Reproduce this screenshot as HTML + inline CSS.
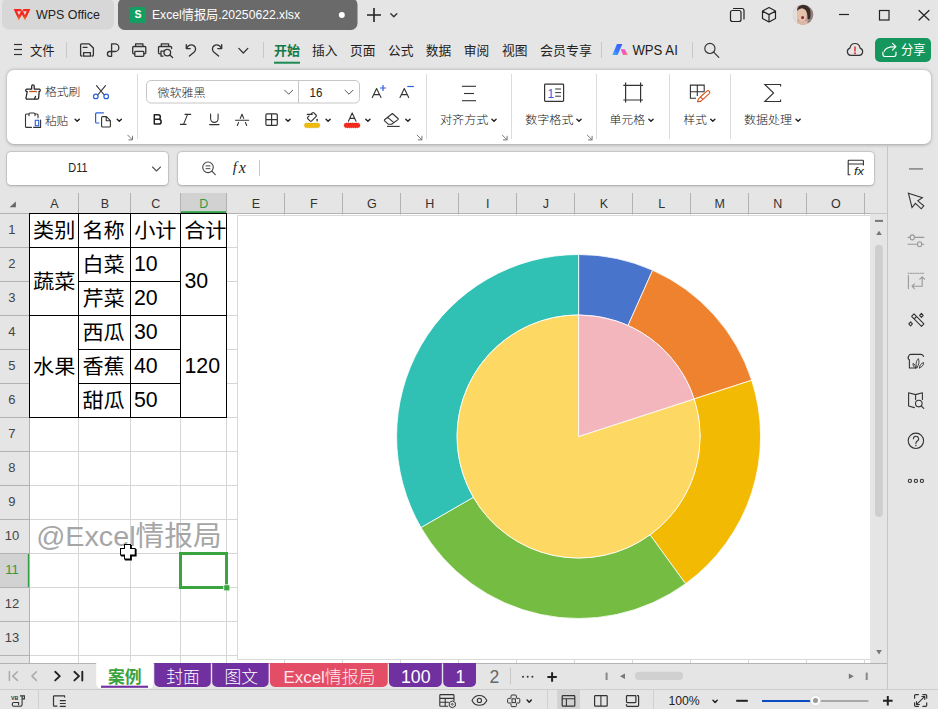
<!DOCTYPE html>
<html lang="zh-CN"><head><meta charset="utf-8"><title>Excel情报局.20250622.xlsx - WPS Office</title>
<style>
html,body{margin:0;padding:0}
body{width:938px;height:709px;overflow:hidden;position:relative;background:#e5e5e5;font-family:"Liberation Sans","Noto Sans CJK SC",sans-serif;}
.panel{position:absolute;background:#fff}
</style></head><body>
<div class="panel" id="ribbon" style="left:7px;top:69.8px;width:924.2px;height:74px;border-radius:7px;box-shadow:0 0.5px 3.5px rgba(0,0,0,.3)"></div>
<div class="panel" id="namebox" style="left:6.6px;top:151.6px;width:161.6px;height:33.9px;border-radius:3.8px;box-shadow:0 0 0 0.6px rgba(0,0,0,.14),0 0.5px 2.5px rgba(0,0,0,.22)"></div>
<div class="panel" id="formulabar" style="left:177.8px;top:151.6px;width:696.5px;height:33.9px;border-radius:3.8px;box-shadow:0 0 0 0.6px rgba(0,0,0,.14),0 0.5px 2.5px rgba(0,0,0,.22)"></div>
<div class="panel" id="sheet" style="left:29px;top:213px;width:841px;height:450px"></div>
<svg width="938" height="709" viewBox="0 0 938 709" style="position:absolute;left:0;top:0;font-family:'Liberation Sans','Noto Sans CJK SC',sans-serif">
<rect x="2" y="-2" width="112" height="31.4" fill="#d7d7d7" rx="6.5"/>
<defs><linearGradient id="wg" x1="0" y1="9" x2="0" y2="20" gradientUnits="userSpaceOnUse"><stop offset="0.55" stop-color="#f5261c"/><stop offset="1" stop-color="#ff7a28"/></linearGradient></defs>
<path d="M21 10.1 H15.4 L18.9 17.9 L22 11.9 L25 17.9 L28.6 10.1 H23.2" fill="none" stroke="url(#wg)" stroke-width="2.3" stroke-linejoin="miter" stroke-linecap="butt"/>
<text x="36" y="19.1" font-size="13.7" fill="#222" textLength="64" lengthAdjust="spacingAndGlyphs">WPS Office</text>
<rect x="118" y="-2" width="239.5" height="32" fill="#6a6a6a" rx="6.5"/>
<rect x="130" y="7" width="16" height="16" fill="#12a062" rx="1.5"/>
<text x="138" y="18.1" font-size="10.5" fill="#fff" font-weight="bold" text-anchor="middle">S</text>
<text x="152" y="19.3" font-size="13" fill="#fff" textLength="148" lengthAdjust="spacingAndGlyphs">Excel情报局.20250622.xlsx</text>
<circle cx="341.8" cy="15" r="3" fill="#fff"/>
<path d="M367 15 H381 M374 8 V22" fill="none" stroke="#222" stroke-width="1.6" stroke-linejoin="round" stroke-linecap="butt"/>
<path d="M390.8 13.7 L393.8 16.7 L396.8 13.7" fill="none" stroke="#333" stroke-width="1.4" stroke-linejoin="round" stroke-linecap="round"/>
<path d="M733.5 8.5 H742 a2 2 0 0 1 2 2 V19" fill="none" stroke="#222" stroke-width="1.2" stroke-linejoin="round" stroke-linecap="round"/>
<rect x="730.5" y="10.5" width="10.5" height="11" fill="none" rx="2" stroke="#222" stroke-width="1.2"/>
<path d="M769 7.5 L775.5 11 V18.5 L769 22 L762.5 18.5 V11 Z M762.8 11.2 L769 14.6 L775.2 11.2 M769 14.6 V21.8" fill="none" stroke="#222" stroke-width="1.2" stroke-linejoin="round" stroke-linecap="round"/>
<clipPath id="av"><circle cx="803" cy="14.6" r="10.2"/></clipPath>
<g clip-path="url(#av)"><rect x="792" y="4" width="22" height="22" fill="#b89c90"/><rect x="792" y="4" width="5.5" height="22" fill="#e2dedc"/><rect x="808" y="8" width="6" height="18" fill="#8f807c"/><path d="M797 11 C797 5 804 3.5 808 6.5 C811 9 811 14 810 19 L807.5 19 C808 13 806 9 802 8.5 C799.5 8.4 798 9.5 797 11 Z" fill="#3b2c29"/><ellipse cx="802" cy="15" rx="4.8" ry="6.6" fill="#e6c2ad"/><ellipse cx="802.6" cy="17.6" rx="1.5" ry="1.7" fill="#8c2f3e"/><rect x="797" y="21" width="10" height="5" fill="#dcb6a6"/></g>
<line x1="839" y1="14.5" x2="849" y2="14.5" stroke="#222" stroke-width="1.2"/>
<rect x="879.5" y="10.5" width="9.5" height="9.5" fill="none" stroke="#222" stroke-width="1.2"/>
<path d="M919 10.5 L929 20 M929 10.5 L919 20" fill="none" stroke="#222" stroke-width="1.2" stroke-linejoin="round" stroke-linecap="round"/>
<line x1="14" y1="44.5" x2="22" y2="44.5" stroke="#333" stroke-width="1.2"/>
<line x1="14" y1="49.5" x2="22" y2="49.5" stroke="#333" stroke-width="1.2"/>
<line x1="14" y1="54.5" x2="22" y2="54.5" stroke="#333" stroke-width="1.2"/>
<text x="30" y="54.6" font-size="12.7" fill="#222" textLength="24.6" lengthAdjust="spacingAndGlyphs">文件</text>
<line x1="66.5" y1="42" x2="66.5" y2="58" stroke="#c8c8c8" stroke-width="1"/>
<path d="M82 56 H81.6 a1 1 0 0 1 -1 -1 V44.8 a1 1 0 0 1 1 -1 H89 L93.4 48 V55 a1 1 0 0 1 -1 1 H92" fill="none" stroke="#333" stroke-width="1.3" stroke-linejoin="round" stroke-linecap="round"/>
<path d="M83.6 56.2 V52.6 H90.4 V56.2 Z M83.2 47.4 H87" fill="none" stroke="#333" stroke-width="1.3" stroke-linejoin="round" stroke-linecap="round"/>
<path d="M111.6 56.3 V43.8 H115 a3.85 3.85 0 0 1 0 7.7 H109.8 a2.4 2.4 0 1 0 0 4.8 H111.6" fill="none" stroke="#333" stroke-width="1.3" stroke-linejoin="round" stroke-linecap="round"/>
<path d="M135.6 46.4 V43.8 H142.9 V46.4 M134.6 53.8 H133.8 a1.1 1.1 0 0 1 -1.1 -1.1 V47.6 a1.1 1.1 0 0 1 1.1 -1.1 H144.7 a1.1 1.1 0 0 1 1.1 1.1 V52.7 a1.1 1.1 0 0 1 -1.1 1.1 H144" fill="none" stroke="#333" stroke-width="1.3" stroke-linejoin="round" stroke-linecap="round"/>
<rect x="134.8" y="51.3" width="9" height="5" fill="none" rx="0.8" stroke="#333" stroke-width="1.3"/>
<path d="M161.3 46.4 V43.8 H168.6 V46.4 M160.6 53.8 H159.6 a1.1 1.1 0 0 1 -1.1 -1.1 V47.6 a1.1 1.1 0 0 1 1.1 -1.1 H170.5 a1.1 1.1 0 0 1 1.1 1.1 V48.5 M164 51.2 H161 V56.2 H163" fill="none" stroke="#333" stroke-width="1.3" stroke-linejoin="round" stroke-linecap="round"/>
<circle cx="167.3" cy="52.6" r="3.3" fill="none" stroke="#333" stroke-width="1.3"/>
<line x1="169.8" y1="55.1" x2="172.6" y2="57.6" stroke="#333" stroke-width="1.3" stroke-linecap="round"/>
<path d="M186.3 44.6 V48.6 H190.2 M186.6 48.4 C188 45.4 191.3 43.8 193.8 45.6 C196.3 47.4 196 50.4 194 52.2 L189.4 56" fill="none" stroke="#333" stroke-width="1.3" stroke-linejoin="round" stroke-linecap="round"/>
<path d="M221.7 44.6 V48.6 H217.8 M221.4 48.4 C220 45.4 216.7 43.8 214.2 45.6 C211.7 47.4 212 50.4 214 52.2 L218.6 56" fill="none" stroke="#333" stroke-width="1.3" stroke-linejoin="round" stroke-linecap="round"/>
<path d="M238.8 48.400000000000006 L243.3 53.0 L247.8 48.400000000000006" fill="none" stroke="#333" stroke-width="1.3" stroke-linejoin="round" stroke-linecap="round"/>
<line x1="263.5" y1="42" x2="263.5" y2="58" stroke="#c8c8c8" stroke-width="1"/>
<text x="274" y="54.9" font-size="12.9" fill="#127a4a" font-weight="bold" textLength="26" lengthAdjust="spacingAndGlyphs">开始</text>
<rect x="274" y="61.7" width="26" height="2" fill="#1c8a52"/>
<text x="312" y="54.9" font-size="12.7" fill="#222" textLength="25.5" lengthAdjust="spacingAndGlyphs">插入</text>
<text x="350" y="54.9" font-size="12.7" fill="#222" textLength="25.5" lengthAdjust="spacingAndGlyphs">页面</text>
<text x="388" y="54.9" font-size="12.7" fill="#222" textLength="25.5" lengthAdjust="spacingAndGlyphs">公式</text>
<text x="425.7" y="54.9" font-size="12.7" fill="#222" textLength="25.5" lengthAdjust="spacingAndGlyphs">数据</text>
<text x="463.8" y="54.9" font-size="12.7" fill="#222" textLength="25.5" lengthAdjust="spacingAndGlyphs">审阅</text>
<text x="502" y="54.9" font-size="12.7" fill="#222" textLength="25.5" lengthAdjust="spacingAndGlyphs">视图</text>
<text x="540" y="54.9" font-size="12.7" fill="#222" textLength="52" lengthAdjust="spacingAndGlyphs">会员专享</text>
<line x1="601.5" y1="42" x2="601.5" y2="58" stroke="#c8c8c8" stroke-width="1"/>
<defs><linearGradient id="ai1" x1="1" y1="0" x2="0" y2="1"><stop offset="0" stop-color="#3d5af5"/><stop offset="0.6" stop-color="#3a78ff"/><stop offset="1" stop-color="#38c0ff"/></linearGradient><linearGradient id="ai2" x1="0" y1="0" x2="1" y2="1"><stop offset="0" stop-color="#e84fd8"/><stop offset="0.6" stop-color="#f658b0"/><stop offset="1" stop-color="#ff9070"/></linearGradient></defs>
<path d="M617 44 H622.4 L617.6 55 H612.3 Z" fill="url(#ai1)" stroke="none" stroke-width="0" stroke-linejoin="round" stroke-linecap="round"/>
<path d="M620.8 49.3 H624.6 L627.9 55 H623.2 L622 52.6 Z" fill="url(#ai2)" stroke="none" stroke-width="0" stroke-linejoin="round" stroke-linecap="round"/>
<text x="632.4" y="55.4" font-size="14" fill="#222" textLength="45.4" lengthAdjust="spacingAndGlyphs">WPS AI</text>
<line x1="692.5" y1="42" x2="692.5" y2="58" stroke="#c8c8c8" stroke-width="1"/>
<circle cx="709.9" cy="48.4" r="5.1" fill="none" stroke="#333" stroke-width="1.15"/>
<line x1="713.7" y1="52.2" x2="718.8" y2="57.4" stroke="#333" stroke-width="1.15" stroke-linecap="round"/>
<path d="M850.8 55.3 a3.7 3.7 0 0 1 -0.9 -7.2 C850.5 45.2 852.6 43.5 855 43.5 C857.4 43.5 859.5 45.2 860.1 48.1 a3.7 3.7 0 0 1 -0.9 7.2 Z" fill="none" stroke="#333" stroke-width="1.2" stroke-linejoin="round" stroke-linecap="round"/>
<line x1="855" y1="46.6" x2="855" y2="51.4" stroke="#e0202a" stroke-width="1.4" stroke-linecap="butt"/>
<circle cx="855" cy="53.2" r="0.95" fill="#e0202a"/>
<rect x="875" y="38" width="56" height="24" fill="#15965d" rx="5"/>
<path d="M882.9 52 V54.3 a2.2 2.2 0 0 0 2.2 2.2 H893.8 a2.2 2.2 0 0 0 2.2 -2.2 V52 M884.3 51.2 C885.5 47.9 889.6 46.7 895.4 46.7 M892.5 43.3 L895.9 46.7 L892.5 50.1" fill="none" stroke="#fff" stroke-width="1.2" stroke-linejoin="round" stroke-linecap="round"/>
<text x="901" y="54.3" font-size="12.6" fill="#fff" textLength="24.6" lengthAdjust="spacingAndGlyphs">分享</text>
<path d="M27.2 91.5 H26.7 a0.9 0.9 0 0 1 -0.9 -0.9 V89.9 a0.9 0.9 0 0 1 0.9 -0.9 H31.7 V86 a1.25 1.25 0 0 1 2.5 0 V89 H39.3 a0.9 0.9 0 0 1 0.9 0.9 V90.6 a0.9 0.9 0 0 1 -0.9 0.9 H38.9 M27.2 91.6 L26 98 a0.9 0.9 0 0 0 0.9 1.1 H37.6 a1 1 0 0 0 1 -0.9 L39.2 91.6 M35.5 96.4 L34.4 99" fill="none" stroke="#222" stroke-width="1.25" stroke-linejoin="round" stroke-linecap="round"/>
<line x1="29.2" y1="91.5" x2="36.9" y2="91.5" stroke="#c8500f" stroke-width="1.3"/>
<text x="45" y="96.4" font-size="11.6" fill="#141414" font-weight="300" textLength="35.4" lengthAdjust="spacingAndGlyphs">格式刷</text>
<path d="M96.5 85.6 L104.3 95 M105.5 85.6 L97.7 95" fill="none" stroke="#333" stroke-width="1.1" stroke-linejoin="round" stroke-linecap="round"/>
<circle cx="95.8" cy="96.4" r="2.3" fill="none" stroke="#2b5fde" stroke-width="1.2"/><circle cx="106.2" cy="96.4" r="2.3" fill="none" stroke="#2b5fde" stroke-width="1.2"/>
<path d="M31.5 127.4 H26.5 a1 1 0 0 1 -1 -1 V115 a1 1 0 0 1 1 -1 H28.6 M35.4 114 H37 a1 1 0 0 1 1 1 V117.8 M29 115.8 V114 a1 1 0 0 1 1 -1 H34 a1 1 0 0 1 1 1 V115.8 M33.6 127.4 H40.6 V120" fill="none" stroke="#333" stroke-width="1.1" stroke-linejoin="round" stroke-linecap="round"/>
<rect x="35.3" y="120.3" width="3.4" height="5.4" fill="none" stroke="#2b5fde" stroke-width="1.1"/>
<text x="45" y="124.6" font-size="11.6" fill="#141414" font-weight="300" textLength="23.2" lengthAdjust="spacingAndGlyphs">粘贴</text>
<path d="M75.10000000000001 119.25 L77.2 121.35 L79.3 119.25" fill="none" stroke="#222" stroke-width="1.4" stroke-linejoin="round" stroke-linecap="round"/>
<path d="M103.4 112.9 H96.6 a1 1 0 0 0 -1 1 V122 a1 1 0 0 0 1 1 H99" fill="none" stroke="#2b5fde" stroke-width="1.2" stroke-linejoin="round" stroke-linecap="round"/>
<path d="M101.6 117.6 a1 1 0 0 1 1 -1 H106.4 L110.4 120.6 V126 a1 1 0 0 1 -1 1 H102.6 a1 1 0 0 1 -1 -1 Z M106.2 116.8 V120.8 H110.2" fill="none" stroke="#333" stroke-width="1.1" stroke-linejoin="round" stroke-linecap="round"/>
<path d="M117.2 119.25 L119.3 121.35 L121.39999999999999 119.25" fill="none" stroke="#222" stroke-width="1.4" stroke-linejoin="round" stroke-linecap="round"/>
<path d="M127.8 135.2 L132.3 139.7 M128.8 139.89999999999998 H132.5 V136.2" fill="none" stroke="#777" stroke-width="1" stroke-linejoin="round" stroke-linecap="round"/>
<line x1="137.5" y1="74" x2="137.5" y2="139" stroke="#dcdcdc" stroke-width="1"/>
<rect x="146.5" y="80.5" width="213" height="22.5" rx="4.5" fill="#fff" stroke="#c6c6c6" stroke-width="1"/>
<line x1="298.5" y1="80.5" x2="298.5" y2="103" stroke="#c6c6c6" stroke-width="1"/>
<text x="157.5" y="97" font-size="11.6" fill="#2a2a2a" font-weight="300" textLength="48" lengthAdjust="spacingAndGlyphs">微软雅黑</text>
<path d="M284.7 90.2 L288.7 94.2 L292.7 90.2" fill="none" stroke="#555" stroke-width="1" stroke-linejoin="round" stroke-linecap="round"/>
<text x="309.6" y="97" font-size="12.5" fill="#222" textLength="12.8" lengthAdjust="spacingAndGlyphs">16</text>
<path d="M345.0 90.2 L349 94.2 L353.0 90.2" fill="none" stroke="#555" stroke-width="1" stroke-linejoin="round" stroke-linecap="round"/>
<path d="M372.3 97.6 L376.6 88.6 L381 97.6 M373.8 94.6 H379.4" fill="none" stroke="#333" stroke-width="1.1" stroke-linejoin="round" stroke-linecap="round"/>
<path d="M380 88 H386 M383 85 V91" fill="none" stroke="#2b5fde" stroke-width="1.2" stroke-linejoin="round" stroke-linecap="butt"/>
<path d="M400 97.6 L404.3 88.6 L408.7 97.6 M401.5 94.6 H407.1" fill="none" stroke="#333" stroke-width="1.1" stroke-linejoin="round" stroke-linecap="round"/>
<path d="M407.3 86.5 H413.8" fill="none" stroke="#2b5fde" stroke-width="1.2" stroke-linejoin="round" stroke-linecap="butt"/>
<path d="M154.3 114.7 V124.1 H158.7 a2.45 2.45 0 0 0 0 -4.9 H154.3 M158.1 119.2 a2.25 2.25 0 0 0 0 -4.5 H154.3" fill="none" stroke="#222" stroke-width="1.5" stroke-linejoin="round" stroke-linecap="round"/>
<path d="M185 114.4 H190.7 M180.4 124.4 H186 M187.6 114.4 L183.5 124.4" fill="none" stroke="#333" stroke-width="1.1" stroke-linejoin="round" stroke-linecap="round"/>
<path d="M210.6 114 V118.6 a3.75 3.75 0 0 0 7.5 0 V114 M209.6 124.6 H219" fill="none" stroke="#333" stroke-width="1.1" stroke-linejoin="round" stroke-linecap="round"/>
<path d="M242 114.2 L240.3 118.4 M242 114.2 L243.7 118.4 M238.6 122.4 L237.3 125.5 M245.4 122.4 L246.7 125.5 M235.5 120.3 H248.6" fill="none" stroke="#333" stroke-width="1.1" stroke-linejoin="round" stroke-linecap="round"/>
<rect x="265.9" y="113.9" width="11.4" height="11.4" fill="none" rx="1" stroke="#333" stroke-width="1.2"/>
<path d="M271.6 113.9 V125.3 M265.9 119.6 H277.3" fill="none" stroke="#333" stroke-width="1.2" stroke-linejoin="round" stroke-linecap="butt"/>
<path d="M285.9 119.25 L288 121.35 L290.1 119.25" fill="none" stroke="#222" stroke-width="1.4" stroke-linejoin="round" stroke-linecap="round"/>
<path d="M309.1 115.9 L307.9 117.1 a1.2 1.2 0 0 0 0 1.7 L310 120.9 a1.2 1.2 0 0 0 1.7 0 L316 116.7 a1.2 1.2 0 0 0 0 -1.7 L313.9 112.9 a1.2 1.2 0 0 0 -1.7 0 L310.8 114.3 M307.3 114.4 H312.2" fill="none" stroke="#333" stroke-width="1.15" stroke-linejoin="round" stroke-linecap="round"/>
<rect x="316.5" y="118.8" width="1.3" height="2.6" fill="#333" rx="0.4"/>
<rect x="304.2" y="123" width="15.8" height="4.8" rx="2.3" fill="#f2b90a" stroke="#8fb81e" stroke-width="0.6" stroke-dasharray="0.9 1.1"/>
<path d="M326.0 119.25 L328.1 121.35 L330.20000000000005 119.25" fill="none" stroke="#222" stroke-width="1.4" stroke-linejoin="round" stroke-linecap="round"/>
<path d="M348.4 121.3 L352.2 112.9 L356 121.3 M349.8 118.4 H354.6" fill="none" stroke="#333" stroke-width="1.1" stroke-linejoin="round" stroke-linecap="round"/>
<rect x="344" y="123" width="16" height="4.8" rx="2.3" fill="#f5281a" stroke="#a01408" stroke-width="0.6" stroke-dasharray="0.9 1.1"/>
<path d="M365.79999999999995 119.25 L367.9 121.35 L370.0 119.25" fill="none" stroke="#222" stroke-width="1.4" stroke-linejoin="round" stroke-linecap="round"/>
<path d="M392.4 113.5 L398 118.5 a0.8 0.8 0 0 1 0 1.1 L391.6 124.2 H388.2 L384.6 120.8 a0.8 0.8 0 0 1 0 -1.1 Z M387.7 117.4 L393.8 122.6" fill="none" stroke="#333" stroke-width="1.1" stroke-linejoin="round" stroke-linecap="round"/>
<line x1="387" y1="126.4" x2="399.7" y2="126.4" stroke="#333" stroke-width="1.1"/>
<path d="M405.79999999999995 119.25 L407.9 121.35 L410.0 119.25" fill="none" stroke="#222" stroke-width="1.4" stroke-linejoin="round" stroke-linecap="round"/>
<path d="M417.2 135.2 L421.7 139.7 M418.2 139.89999999999998 H421.9 V136.2" fill="none" stroke="#777" stroke-width="1" stroke-linejoin="round" stroke-linecap="round"/>
<line x1="426.5" y1="74" x2="426.5" y2="139" stroke="#dcdcdc" stroke-width="1"/>
<line x1="462" y1="86.3" x2="476" y2="86.3" stroke="#333" stroke-width="1.1"/>
<line x1="464" y1="93.5" x2="474" y2="93.5" stroke="#333" stroke-width="1.1"/>
<line x1="462" y1="100.7" x2="476" y2="100.7" stroke="#333" stroke-width="1.1"/>
<text x="440" y="124.4" font-size="11.6" fill="#141414" font-weight="300" textLength="48.3" lengthAdjust="spacingAndGlyphs">对齐方式</text>
<path d="M491.9 119.25 L494 121.35 L496.1 119.25" fill="none" stroke="#222" stroke-width="1.4" stroke-linejoin="round" stroke-linecap="round"/>
<path d="M502.4 135.2 L506.9 139.7 M503.4 139.89999999999998 H507.09999999999997 V136.2" fill="none" stroke="#777" stroke-width="1" stroke-linejoin="round" stroke-linecap="round"/>
<line x1="511.5" y1="74" x2="511.5" y2="139" stroke="#dcdcdc" stroke-width="1"/>
<rect x="544.6" y="84.2" width="19" height="17.2" fill="none" rx="0.8" stroke="#333" stroke-width="1.2"/>
<text x="547.6" y="97.6" font-size="12" fill="#2b5fde">1</text>
<line x1="555.2" y1="89" x2="561" y2="89" stroke="#333" stroke-width="1"/>
<line x1="555.2" y1="92.6" x2="561" y2="92.6" stroke="#333" stroke-width="1"/>
<line x1="555.2" y1="96.2" x2="561" y2="96.2" stroke="#333" stroke-width="1"/>
<text x="525.2" y="124.4" font-size="11.6" fill="#141414" font-weight="300" textLength="48.3" lengthAdjust="spacingAndGlyphs">数字格式</text>
<path d="M576.9 119.25 L579 121.35 L581.1 119.25" fill="none" stroke="#222" stroke-width="1.4" stroke-linejoin="round" stroke-linecap="round"/>
<path d="M587.4 135.2 L591.9 139.7 M588.4 139.89999999999998 H592.1 V136.2" fill="none" stroke="#777" stroke-width="1" stroke-linejoin="round" stroke-linecap="round"/>
<line x1="596.5" y1="74" x2="596.5" y2="139" stroke="#dcdcdc" stroke-width="1"/>
<path d="M625.6 82.5 V102.5 M640.6 82.5 V102.5 M623.3 85.4 H643 M623.3 100 H643" fill="none" stroke="#333" stroke-width="1.2" stroke-linejoin="round" stroke-linecap="butt"/>
<text x="609.5" y="124.4" font-size="11.6" fill="#141414" font-weight="300" textLength="35.6" lengthAdjust="spacingAndGlyphs">单元格</text>
<path d="M648.9 119.25 L651 121.35 L653.1 119.25" fill="none" stroke="#222" stroke-width="1.4" stroke-linejoin="round" stroke-linecap="round"/>
<line x1="669.5" y1="74" x2="669.5" y2="139" stroke="#dcdcdc" stroke-width="1"/>
<path d="M704.2 91.7 V85.1 H690.4 V98.2 H696 M697.3 85.1 V96 M690.4 91.7 H704.2" fill="none" stroke="#333" stroke-width="1.1" stroke-linejoin="miter" stroke-linecap="butt"/>
<path d="M706.8 91.2 a1.6 1.6 0 0 1 2.4 2.4 L703 99.4 L700.4 97 Z M700.4 97 L698.4 99.2 L697.4 101.8 L700.6 101.4 L703 99.4" fill="none" stroke="#d9541e" stroke-width="1.1" stroke-linejoin="round" stroke-linecap="round"/>
<text x="683.6" y="124.4" font-size="11.6" fill="#141414" font-weight="300" textLength="23.2" lengthAdjust="spacingAndGlyphs">样式</text>
<path d="M710.6999999999999 119.25 L712.8 121.35 L714.9 119.25" fill="none" stroke="#222" stroke-width="1.4" stroke-linejoin="round" stroke-linecap="round"/>
<line x1="730.5" y1="74" x2="730.5" y2="139" stroke="#dcdcdc" stroke-width="1"/>
<path d="M780.6 86.6 V84.5 H764.8 L773.6 93 L764.8 101.5 H780.6 V99.4" fill="none" stroke="#333" stroke-width="1.1" stroke-linejoin="miter" stroke-linecap="butt"/>
<text x="743.9" y="124.4" font-size="11.6" fill="#141414" font-weight="300" textLength="48" lengthAdjust="spacingAndGlyphs">数据处理</text>
<path d="M796.0 119.25 L798.1 121.35 L800.2 119.25" fill="none" stroke="#222" stroke-width="1.4" stroke-linejoin="round" stroke-linecap="round"/>
<text x="68.3" y="172.4" font-size="12" fill="#222" textLength="19.2" lengthAdjust="spacingAndGlyphs">D11</text>
<path d="M152.5 167.0 L156.5 171.0 L160.5 167.0" fill="none" stroke="#555" stroke-width="1.1" stroke-linejoin="round" stroke-linecap="round"/>
<circle cx="208" cy="167.3" r="5.3" fill="none" stroke="#444" stroke-width="1.1"/>
<line x1="211.9" y1="171.2" x2="215.3" y2="174.6" stroke="#444" stroke-width="1.1" stroke-linecap="round"/>
<line x1="205.6" y1="165.9" x2="210.4" y2="165.9" stroke="#444" stroke-width="1"/>
<line x1="205.6" y1="168.7" x2="210.4" y2="168.7" stroke="#444" stroke-width="1"/>
<text x="232.8" y="172" font-size="14.8" fill="#222" font-style="italic" font-family="'Liberation Serif',serif">f</text>
<text x="238.8" y="173.4" font-size="16" fill="#222" font-style="italic" font-family="'Liberation Serif',serif">x</text>
<line x1="259.5" y1="160" x2="259.5" y2="176" stroke="#c8c8c8" stroke-width="1"/>
<path d="M848.2 174.6 V161 a0.8 0.8 0 0 1 0.8 -0.8 H862.6 a0.8 0.8 0 0 1 0.8 0.8 V165 M848.2 164 H863.4 M848.2 174.8 H850" fill="none" stroke="#333" stroke-width="1.1" stroke-linejoin="round" stroke-linecap="round"/>
<text x="854" y="174.9" font-size="11" fill="#222" textLength="10" lengthAdjust="spacingAndGlyphs" font-style="italic">fx</text>
<rect x="181" y="193" width="45" height="18.5" fill="#d2d2d2"/>
<rect x="180.5" y="211.2" width="46.5" height="2" fill="#2ea043"/>
<line x1="78.5" y1="193" x2="78.5" y2="213" stroke="#b2b2b2" stroke-width="1"/>
<line x1="130.5" y1="193" x2="130.5" y2="213" stroke="#b2b2b2" stroke-width="1"/>
<line x1="180.5" y1="193" x2="180.5" y2="213" stroke="#b2b2b2" stroke-width="1"/>
<line x1="226.5" y1="193" x2="226.5" y2="213" stroke="#b2b2b2" stroke-width="1"/>
<line x1="284.5" y1="193" x2="284.5" y2="213" stroke="#b2b2b2" stroke-width="1"/>
<line x1="342.5" y1="193" x2="342.5" y2="213" stroke="#b2b2b2" stroke-width="1"/>
<line x1="400.5" y1="193" x2="400.5" y2="213" stroke="#b2b2b2" stroke-width="1"/>
<line x1="458.5" y1="193" x2="458.5" y2="213" stroke="#b2b2b2" stroke-width="1"/>
<line x1="516.5" y1="193" x2="516.5" y2="213" stroke="#b2b2b2" stroke-width="1"/>
<line x1="574.5" y1="193" x2="574.5" y2="213" stroke="#b2b2b2" stroke-width="1"/>
<line x1="632.5" y1="193" x2="632.5" y2="213" stroke="#b2b2b2" stroke-width="1"/>
<line x1="690.5" y1="193" x2="690.5" y2="213" stroke="#b2b2b2" stroke-width="1"/>
<line x1="748.5" y1="193" x2="748.5" y2="213" stroke="#b2b2b2" stroke-width="1"/>
<line x1="806.5" y1="193" x2="806.5" y2="213" stroke="#b2b2b2" stroke-width="1"/>
<line x1="864.5" y1="193" x2="864.5" y2="213" stroke="#b2b2b2" stroke-width="1"/>
<text x="54.3" y="207.9" font-size="12.5" fill="#333" text-anchor="middle">A</text>
<text x="104.8" y="207.9" font-size="12.5" fill="#333" text-anchor="middle">B</text>
<text x="155.8" y="207.9" font-size="12.5" fill="#333" text-anchor="middle">C</text>
<text x="203.8" y="207.9" font-size="12.5" fill="#2e9b40" text-anchor="middle">D</text>
<text x="255.8" y="207.9" font-size="12.5" fill="#333" text-anchor="middle">E</text>
<text x="313.8" y="207.9" font-size="12.5" fill="#333" text-anchor="middle">F</text>
<text x="371.8" y="207.9" font-size="12.5" fill="#333" text-anchor="middle">G</text>
<text x="429.8" y="207.9" font-size="12.5" fill="#333" text-anchor="middle">H</text>
<text x="487.8" y="207.9" font-size="12.5" fill="#333" text-anchor="middle">I</text>
<text x="545.8" y="207.9" font-size="12.5" fill="#333" text-anchor="middle">J</text>
<text x="603.8" y="207.9" font-size="12.5" fill="#333" text-anchor="middle">K</text>
<text x="661.8" y="207.9" font-size="12.5" fill="#333" text-anchor="middle">L</text>
<text x="719.8" y="207.9" font-size="12.5" fill="#333" text-anchor="middle">M</text>
<text x="777.8" y="207.9" font-size="12.5" fill="#333" text-anchor="middle">N</text>
<text x="835.8" y="207.9" font-size="12.5" fill="#333" text-anchor="middle">O</text>
<path d="M15.9 201.6 V207.3 H9.6 Z" fill="#666"/>
<rect x="0" y="553.5" width="29" height="33.5" fill="#d2d2d2"/>
<rect x="27.8" y="553" width="1.6" height="34.5" fill="#2ea043"/>
<line x1="0" y1="247.5" x2="29" y2="247.5" stroke="#b2b2b2" stroke-width="1"/>
<line x1="29" y1="247.5" x2="870" y2="247.5" stroke="#d6d6d6" stroke-width="1"/>
<text x="11.9" y="234.4" font-size="13" fill="#444" text-anchor="middle">1</text>
<line x1="0" y1="281.5" x2="29" y2="281.5" stroke="#b2b2b2" stroke-width="1"/>
<line x1="29" y1="281.5" x2="870" y2="281.5" stroke="#d6d6d6" stroke-width="1"/>
<text x="11.9" y="268.4" font-size="13" fill="#444" text-anchor="middle">2</text>
<line x1="0" y1="315.5" x2="29" y2="315.5" stroke="#b2b2b2" stroke-width="1"/>
<line x1="29" y1="315.5" x2="870" y2="315.5" stroke="#d6d6d6" stroke-width="1"/>
<text x="11.9" y="302.4" font-size="13" fill="#444" text-anchor="middle">3</text>
<line x1="0" y1="349.5" x2="29" y2="349.5" stroke="#b2b2b2" stroke-width="1"/>
<line x1="29" y1="349.5" x2="870" y2="349.5" stroke="#d6d6d6" stroke-width="1"/>
<text x="11.9" y="336.4" font-size="13" fill="#444" text-anchor="middle">4</text>
<line x1="0" y1="383.5" x2="29" y2="383.5" stroke="#b2b2b2" stroke-width="1"/>
<line x1="29" y1="383.5" x2="870" y2="383.5" stroke="#d6d6d6" stroke-width="1"/>
<text x="11.9" y="370.4" font-size="13" fill="#444" text-anchor="middle">5</text>
<line x1="0" y1="417.5" x2="29" y2="417.5" stroke="#b2b2b2" stroke-width="1"/>
<line x1="29" y1="417.5" x2="870" y2="417.5" stroke="#d6d6d6" stroke-width="1"/>
<text x="11.9" y="404.4" font-size="13" fill="#444" text-anchor="middle">6</text>
<line x1="0" y1="451.5" x2="29" y2="451.5" stroke="#b2b2b2" stroke-width="1"/>
<line x1="29" y1="451.5" x2="870" y2="451.5" stroke="#d6d6d6" stroke-width="1"/>
<text x="11.9" y="438.4" font-size="13" fill="#444" text-anchor="middle">7</text>
<line x1="0" y1="485.5" x2="29" y2="485.5" stroke="#b2b2b2" stroke-width="1"/>
<line x1="29" y1="485.5" x2="870" y2="485.5" stroke="#d6d6d6" stroke-width="1"/>
<text x="11.9" y="472.4" font-size="13" fill="#444" text-anchor="middle">8</text>
<line x1="0" y1="519.5" x2="29" y2="519.5" stroke="#b2b2b2" stroke-width="1"/>
<line x1="29" y1="519.5" x2="870" y2="519.5" stroke="#d6d6d6" stroke-width="1"/>
<text x="11.9" y="506.4" font-size="13" fill="#444" text-anchor="middle">9</text>
<line x1="0" y1="553.5" x2="29" y2="553.5" stroke="#b2b2b2" stroke-width="1"/>
<line x1="29" y1="553.5" x2="870" y2="553.5" stroke="#d6d6d6" stroke-width="1"/>
<text x="11.9" y="540.4" font-size="13" fill="#444" text-anchor="middle">10</text>
<line x1="0" y1="587.5" x2="29" y2="587.5" stroke="#b2b2b2" stroke-width="1"/>
<line x1="29" y1="587.5" x2="870" y2="587.5" stroke="#d6d6d6" stroke-width="1"/>
<text x="11.9" y="574.4" font-size="13" fill="#2e9b40" text-anchor="middle">11</text>
<line x1="0" y1="621.5" x2="29" y2="621.5" stroke="#b2b2b2" stroke-width="1"/>
<line x1="29" y1="621.5" x2="870" y2="621.5" stroke="#d6d6d6" stroke-width="1"/>
<text x="11.9" y="608.4" font-size="13" fill="#444" text-anchor="middle">12</text>
<line x1="0" y1="655.5" x2="29" y2="655.5" stroke="#b2b2b2" stroke-width="1"/>
<line x1="29" y1="655.5" x2="870" y2="655.5" stroke="#d6d6d6" stroke-width="1"/>
<text x="11.9" y="642.4" font-size="13" fill="#444" text-anchor="middle">13</text>
<line x1="0" y1="213.5" x2="870" y2="213.5" stroke="#b2b2b2" stroke-width="1"/>
<line x1="29.5" y1="214" x2="29.5" y2="663" stroke="#d6d6d6" stroke-width="1"/>
<line x1="78.5" y1="214" x2="78.5" y2="663" stroke="#d6d6d6" stroke-width="1"/>
<line x1="130.5" y1="214" x2="130.5" y2="663" stroke="#d6d6d6" stroke-width="1"/>
<line x1="180.5" y1="214" x2="180.5" y2="663" stroke="#d6d6d6" stroke-width="1"/>
<line x1="226.5" y1="214" x2="226.5" y2="663" stroke="#d6d6d6" stroke-width="1"/>
<line x1="284.5" y1="214" x2="284.5" y2="663" stroke="#d6d6d6" stroke-width="1"/>
<line x1="342.5" y1="214" x2="342.5" y2="663" stroke="#d6d6d6" stroke-width="1"/>
<line x1="400.5" y1="214" x2="400.5" y2="663" stroke="#d6d6d6" stroke-width="1"/>
<line x1="458.5" y1="214" x2="458.5" y2="663" stroke="#d6d6d6" stroke-width="1"/>
<line x1="516.5" y1="214" x2="516.5" y2="663" stroke="#d6d6d6" stroke-width="1"/>
<line x1="574.5" y1="214" x2="574.5" y2="663" stroke="#d6d6d6" stroke-width="1"/>
<line x1="632.5" y1="214" x2="632.5" y2="663" stroke="#d6d6d6" stroke-width="1"/>
<line x1="690.5" y1="214" x2="690.5" y2="663" stroke="#d6d6d6" stroke-width="1"/>
<line x1="748.5" y1="214" x2="748.5" y2="663" stroke="#d6d6d6" stroke-width="1"/>
<line x1="806.5" y1="214" x2="806.5" y2="663" stroke="#d6d6d6" stroke-width="1"/>
<line x1="864.5" y1="214" x2="864.5" y2="663" stroke="#d6d6d6" stroke-width="1"/>
<line x1="29.5" y1="214" x2="29.5" y2="663" stroke="#b2b2b2" stroke-width="1"/>
<rect x="30" y="214" width="196.5" height="203.5" fill="#fff"/>
<line x1="29.5" y1="213.5" x2="29.5" y2="417.5" stroke="#000" stroke-width="1" stroke-linecap="square"/>
<line x1="78.5" y1="213.5" x2="78.5" y2="417.5" stroke="#000" stroke-width="1" stroke-linecap="square"/>
<line x1="130.5" y1="213.5" x2="130.5" y2="417.5" stroke="#000" stroke-width="1" stroke-linecap="square"/>
<line x1="180.5" y1="213.5" x2="180.5" y2="417.5" stroke="#000" stroke-width="1" stroke-linecap="square"/>
<line x1="226.5" y1="213.5" x2="226.5" y2="417.5" stroke="#000" stroke-width="1" stroke-linecap="square"/>
<line x1="29.5" y1="213.5" x2="226.5" y2="213.5" stroke="#000" stroke-width="1" stroke-linecap="square"/>
<line x1="29.5" y1="247.5" x2="226.5" y2="247.5" stroke="#000" stroke-width="1" stroke-linecap="square"/>
<line x1="29.5" y1="315.5" x2="226.5" y2="315.5" stroke="#000" stroke-width="1" stroke-linecap="square"/>
<line x1="29.5" y1="417.5" x2="226.5" y2="417.5" stroke="#000" stroke-width="1" stroke-linecap="square"/>
<line x1="78.5" y1="281.5" x2="180.5" y2="281.5" stroke="#000" stroke-width="1" stroke-linecap="square"/>
<line x1="78.5" y1="349.5" x2="180.5" y2="349.5" stroke="#000" stroke-width="1" stroke-linecap="square"/>
<line x1="78.5" y1="383.5" x2="180.5" y2="383.5" stroke="#000" stroke-width="1" stroke-linecap="square"/>
<text x="33" y="237.9" font-size="20" fill="#000" textLength="42.3" lengthAdjust="spacingAndGlyphs">类别</text>
<text x="82.4" y="237.9" font-size="20" fill="#000" textLength="42.3" lengthAdjust="spacingAndGlyphs">名称</text>
<text x="134.2" y="237.9" font-size="20" fill="#000" textLength="42.3" lengthAdjust="spacingAndGlyphs">小计</text>
<text x="184.2" y="237.9" font-size="20" fill="#000" textLength="42.3" lengthAdjust="spacingAndGlyphs">合计</text>
<text x="33" y="288.9" font-size="20" fill="#000" textLength="42.3" lengthAdjust="spacingAndGlyphs">蔬菜</text>
<text x="33" y="373.9" font-size="20" fill="#000" textLength="42.3" lengthAdjust="spacingAndGlyphs">水果</text>
<text x="82.4" y="271.9" font-size="20" fill="#000" textLength="42.3" lengthAdjust="spacingAndGlyphs">白菜</text>
<text x="82.4" y="305.9" font-size="20" fill="#000" textLength="42.3" lengthAdjust="spacingAndGlyphs">芹菜</text>
<text x="82.4" y="339.9" font-size="20" fill="#000" textLength="42.3" lengthAdjust="spacingAndGlyphs">西瓜</text>
<text x="82.4" y="373.9" font-size="20" fill="#000" textLength="42.3" lengthAdjust="spacingAndGlyphs">香蕉</text>
<text x="82.4" y="407.9" font-size="20" fill="#000" textLength="42.3" lengthAdjust="spacingAndGlyphs">甜瓜</text>
<text x="134" y="271.3" font-size="21.33" fill="#000">10</text>
<text x="134" y="305.3" font-size="21.33" fill="#000">20</text>
<text x="134" y="339.3" font-size="21.33" fill="#000">30</text>
<text x="134" y="373.3" font-size="21.33" fill="#000">40</text>
<text x="134" y="407.3" font-size="21.33" fill="#000">50</text>
<text x="184.5" y="288.3" font-size="21.33" fill="#000">30</text>
<text x="184.5" y="373.3" font-size="21.33" fill="#000">120</text>
<text x="36.2" y="546.3" font-size="28" fill="#a6a6a6" textLength="185.6" lengthAdjust="spacingAndGlyphs">@Excel情报局</text>
<rect x="180.5" y="553.5" width="46" height="34" fill="none" stroke="#3aa53f" stroke-width="3"/>
<rect x="223.4" y="584.4" width="6.2" height="6.2" fill="#fff"/>
<rect x="224.2" y="585.2" width="5.2" height="5.2" fill="#3aa53f"/>
<rect x="237.5" y="215.5" width="640" height="444" fill="#fff" stroke="#d9d9d9" stroke-width="1"/>
<path d="M578.60 254.50 A182 182 0 0 1 652.63 270.23 L628.02 325.50 A121.5 121.5 0 0 0 578.60 315.00 Z" fill="#4874cb" stroke="#fff" stroke-width="0.8" stroke-linejoin="round"/>
<path d="M652.63 270.23 A182 182 0 0 1 751.69 380.26 L694.15 398.95 A121.5 121.5 0 0 0 628.02 325.50 Z" fill="#ee822f" stroke="#fff" stroke-width="0.8" stroke-linejoin="round"/>
<path d="M751.69 380.26 A182 182 0 0 1 685.58 583.74 L650.02 534.80 A121.5 121.5 0 0 0 694.15 398.95 Z" fill="#f2ba02" stroke="#fff" stroke-width="0.8" stroke-linejoin="round"/>
<path d="M685.58 583.74 A182 182 0 0 1 420.98 527.50 L473.38 497.25 A121.5 121.5 0 0 0 650.02 534.80 Z" fill="#75bd42" stroke="#fff" stroke-width="0.8" stroke-linejoin="round"/>
<path d="M420.98 527.50 A182 182 0 0 1 578.60 254.50 L578.60 315.00 A121.5 121.5 0 0 0 473.38 497.25 Z" fill="#30c0b4" stroke="#fff" stroke-width="0.8" stroke-linejoin="round"/>
<path d="M578.6 436.5 L694.15 398.95 A121.5 121.5 0 1 1 578.60 315.00 Z" fill="#fdd862" stroke="#fff" stroke-width="0.8" stroke-linejoin="round"/>
<path d="M578.6 436.5 L578.60 315.00 A121.5 121.5 0 0 1 694.15 398.95 Z" fill="#f4b6bd" stroke="#fff" stroke-width="0.8" stroke-linejoin="round"/>
<path d="M124 544 H131 V548 H135.7 V555.5 H131 V559.5 H124 V555.5 H120 V548 H124 Z" fill="#000" transform="translate(0.9,0.9)"/><path d="M124 544 H131 V548 H135.7 V555.5 H131 V559.5 H124 V555.5 H120 V548 H124 Z" fill="#000"/><path d="M125 545 H130 V549 H134.7 V554.5 H130 V558.5 H125 V554.5 H121 V549 H125 Z" fill="#fff"/>
<rect x="870" y="214" width="17.5" height="449.5" fill="#e5e5e5"/>
<line x1="870" y1="213.5" x2="888" y2="213.5" stroke="#c8c8c8" stroke-width="1"/>
<line x1="887.5" y1="145" x2="887.5" y2="689" stroke="#c6c6c6" stroke-width="1"/>
<line x1="875" y1="220.9" x2="883" y2="220.9" stroke="#777" stroke-width="2"/>
<path d="M876.2 235.1 L879 230.7 L881.8 235.1 Z" fill="#777"/>
<rect x="875" y="244.8" width="7.8" height="272.2" fill="#cecece" rx="3.9"/>
<path d="M876.2 650 L879 654.4 L881.8 650 Z" fill="#777"/>
<line x1="0" y1="663.5" x2="96" y2="663.5" stroke="#c8c8c8" stroke-width="1"/>
<line x1="152" y1="663.5" x2="888" y2="663.5" stroke="#c8c8c8" stroke-width="1"/>
<rect x="0" y="664" width="938" height="25" fill="#e5e5e5"/>
<line x1="0" y1="663.5" x2="888" y2="663.5" stroke="#b4b4b4" stroke-width="1"/>
<line x1="887.5" y1="663" x2="887.5" y2="689" stroke="#c6c6c6" stroke-width="1"/>
<path d="M9.4 671.6 V680.6 M17.4 671.8 L12.8 676.1 L17.4 680.4" fill="none" stroke="#aaa" stroke-width="1.5" stroke-linejoin="round" stroke-linecap="round"/>
<path d="M36.4 671.8 L31.9 676.1 L36.4 680.4" fill="none" stroke="#aaa" stroke-width="1.5" stroke-linejoin="round" stroke-linecap="round"/>
<path d="M55.2 671.8 L59.8 676.1 L55.2 680.4" fill="none" stroke="#222" stroke-width="1.9" stroke-linejoin="round" stroke-linecap="round"/>
<path d="M74.4 671.8 L79 676.1 L74.4 680.4 M82.3 671.6 V680.6" fill="none" stroke="#222" stroke-width="1.9" stroke-linejoin="round" stroke-linecap="round"/>
<path d="M96.2 662 H153.3 V683.6 a5 5 0 0 1 -5 5 H101.2 a5 5 0 0 1 -5 -5 Z" fill="#fff"/>
<text x="108" y="682.8" font-size="17" fill="#3aa23a" font-weight="bold" textLength="33.6" lengthAdjust="spacingAndGlyphs">案例</text>
<rect x="101" y="685.7" width="47" height="2.1" fill="#7030a0"/>
<path d="M154.3 663 H210.8 V682 a5 5 0 0 1 -5 5 H159.3 a5 5 0 0 1 -5 -5 Z" fill="#7030a0"/>
<text x="166.2" y="682.6" font-size="16.8" fill="#fff" font-weight="300" textLength="33.4" lengthAdjust="spacingAndGlyphs">封面</text>
<path d="M212.2 663 H268.6 V682 a5 5 0 0 1 -5 5 H217.2 a5 5 0 0 1 -5 -5 Z" fill="#7030a0"/>
<text x="224.4" y="682.6" font-size="16.8" fill="#fff" font-weight="300" textLength="33.6" lengthAdjust="spacingAndGlyphs">图文</text>
<path d="M270 663 H387.7 V682 a5 5 0 0 1 -5 5 H275 a5 5 0 0 1 -5 -5 Z" fill="#e34d66"/>
<text x="283.6" y="682.6" font-size="16.8" fill="#fde8ee" font-weight="300" textLength="91.8" lengthAdjust="spacingAndGlyphs">Excel情报局</text>
<path d="M389 663 H441.8 V682 a5 5 0 0 1 -5 5 H394 a5 5 0 0 1 -5 -5 Z" fill="#7030a0"/>
<text x="401" y="683" font-size="17.5" fill="#fff" textLength="29.6" lengthAdjust="spacingAndGlyphs">100</text>
<path d="M443.2 663 H476 V682 a5 5 0 0 1 -5 5 H448.2 a5 5 0 0 1 -5 -5 Z" fill="#7030a0"/>
<text x="455.4" y="683" font-size="17.5" fill="#fff">1</text>
<text x="489.4" y="683" font-size="17.5" fill="#666">2</text>
<line x1="510.5" y1="667.5" x2="510.5" y2="684.5" stroke="#c8c8c8" stroke-width="1"/>
<circle cx="523" cy="676.7" r="1" fill="#333"/>
<circle cx="527.7" cy="676.7" r="1" fill="#333"/>
<circle cx="532.4" cy="676.7" r="1" fill="#333"/>
<path d="M547.4 677 H556.8 M552.1 672.2 V681.8" fill="none" stroke="#222" stroke-width="2" stroke-linejoin="round" stroke-linecap="butt"/>
<line x1="606.6" y1="672.6" x2="606.6" y2="680" stroke="#888" stroke-width="2"/>
<path d="M625 673.6 L620 676.3 L625 679 Z" fill="#777"/>
<rect x="635" y="671.7" width="48" height="8.2" fill="#d0d0d0" rx="4"/>
<path d="M848.8 673.6 L853.8 676.3 L848.8 679 Z" fill="#777"/>
<line x1="866.7" y1="672.6" x2="866.7" y2="680" stroke="#888" stroke-width="2"/>
<line x1="0" y1="689.5" x2="938" y2="689.5" stroke="#cdcdcd" stroke-width="1"/>
<line x1="38.5" y1="690" x2="38.5" y2="709" stroke="#d0d0d0" stroke-width="1"/>
<text x="11" y="699.6" font-size="5.6" fill="#333" font-weight="bold" textLength="7.4" lengthAdjust="spacingAndGlyphs">VB</text>
<path d="M20.4 695.9 H24.4 V698.9 H22.3 M22.1 695.9 V704.6 a1.7 1.7 0 0 1 -1.7 1.7 H13.8 a1.5 1.5 0 0 1 -1.5 -1.5 V704 a1.5 1.5 0 0 1 1.5 -1.5 H18.6 V704.8" fill="none" stroke="#333" stroke-width="1.1" stroke-linejoin="miter" stroke-linecap="round"/>
<path d="M64.6 697.6 V695.9 H54.3 a0.8 0.8 0 0 0 -0.8 0.8 V705.4 a0.8 0.8 0 0 0 0.8 0.8 H57.4 M59.8 700.6 H65.8 M59.8 703.5 H65.8 M59.8 706.3 H65.8" fill="none" stroke="#333" stroke-width="1.2" stroke-linejoin="round" stroke-linecap="butt"/>
<path d="M454 700.4 V695.4 a0.8 0.8 0 0 0 -0.8 -0.8 H440.6 a0.8 0.8 0 0 0 -0.8 0.8 V705.4 a0.8 0.8 0 0 0 0.8 0.8 H447.6 M439.8 698.4 H454 M439.8 702.3 H448.4 M445.2 698.4 V706.2" fill="none" stroke="#333" stroke-width="1.1" stroke-linejoin="round" stroke-linecap="round"/>
<path d="M452.3 700.9 L455.3 702.6 V706.1 L452.3 707.8 L449.3 706.1 V702.6 Z" fill="#e5e5e5" stroke="#333" stroke-width="1"/><circle cx="452.3" cy="704.35" r="0.9" fill="none" stroke="#333" stroke-width="0.8"/>
<path d="M472 700.4 C475.2 693.9 483.6 693.9 486.8 700.4 C483.6 706.9 475.2 706.9 472 700.4 Z" fill="none" stroke="#333" stroke-width="1.1" stroke-linejoin="round" stroke-linecap="round"/>
<circle cx="479.4" cy="700.4" r="2.1" fill="none" stroke="#333" stroke-width="1.1"/>
<path d="M511 697.6 V696 a1 1 0 0 1 1 -1 H515.4 a1 1 0 0 1 1 1 V697.6 M511 703.8 V705.6 a1 1 0 0 0 1 1 H515.4 a1 1 0 0 0 1 -1 V703.8 M510.4 698.4 H508.6 a1 1 0 0 0 -1 1 V702 a1 1 0 0 0 1 1 H510.4 M517 698.4 H518.8 a1 1 0 0 1 1 1 V702 a1 1 0 0 1 -1 1 H517" fill="none" stroke="#333" stroke-width="1" stroke-linejoin="round" stroke-linecap="round"/>
<rect x="512" y="698.8" width="3.4" height="3.8" fill="none" stroke="#333" stroke-width="1"/>
<path d="M527.1 700.1 L529.2 702.3000000000001 L531.3000000000001 700.1" fill="none" stroke="#222" stroke-width="1.5" stroke-linejoin="round" stroke-linecap="round"/>
<line x1="547.5" y1="690" x2="547.5" y2="709" stroke="#d0d0d0" stroke-width="1"/>
<rect x="557.2" y="690" width="22.8" height="19" fill="#d2d2d2"/>
<rect x="562.2" y="695.6" width="12.6" height="10.6" fill="none" rx="0.8" stroke="#333" stroke-width="1.2"/>
<path d="M562.2 698.8 H574.8000000000001 M566.4000000000001 698.8 V706" fill="none" stroke="#333" stroke-width="1.1" stroke-linejoin="round" stroke-linecap="butt"/>
<rect x="594.6" y="695.6" width="12.6" height="10.6" fill="none" rx="0.8" stroke="#333" stroke-width="1.2"/>
<path d="M600.9 695.6 V706" fill="none" stroke="#333" stroke-width="1.1" stroke-linejoin="round" stroke-linecap="butt"/>
<rect x="626.5" y="695.6" width="9.4" height="7" fill="none" rx="0.8" stroke="#333" stroke-width="1.2"/>
<path d="M637.4 695.6 H637.8 a0.8 0.8 0 0 1 0.8 0.8 V705.5 a0.8 0.8 0 0 1 -0.8 0.8 H627.3 a0.8 0.8 0 0 1 -0.8 -0.8 V704.6" fill="none" stroke="#333" stroke-width="1.2" stroke-linejoin="round" stroke-linecap="round"/>
<line x1="653.5" y1="690" x2="653.5" y2="709" stroke="#d0d0d0" stroke-width="1"/>
<text x="668.4" y="704.6" font-size="13" fill="#222" textLength="31.4" lengthAdjust="spacingAndGlyphs">100%</text>
<path d="M713.0 700.3 L715.1 702.5 L717.2 700.3" fill="none" stroke="#222" stroke-width="1.5" stroke-linejoin="round" stroke-linecap="round"/>
<line x1="736.2" y1="700.8" x2="747.8" y2="700.8" stroke="#222" stroke-width="2"/>
<line x1="762" y1="700.9" x2="811" y2="700.9" stroke="#0a4bc2" stroke-width="2"/>
<line x1="820" y1="700.9" x2="868.4" y2="700.9" stroke="#a8a8a8" stroke-width="2"/>
<circle cx="815.5" cy="700.6" r="5.2" fill="#fbfbfb" stroke="#d8d8d8" stroke-width="0.7"/><circle cx="815.5" cy="700.6" r="2.5" fill="#999"/>
<path d="M883 700.8 H892.6 M887.8 696 V705.6" fill="none" stroke="#222" stroke-width="2" stroke-linejoin="round" stroke-linecap="butt"/>
<path d="M914.6 698.2 V695.7 a1.1 1.1 0 0 1 1.1 -1.1 H918.4 M922.9 694.6 H925.6 a1.1 1.1 0 0 1 1.1 1.1 V698.2 M914.6 702.8 V705.3 a1.1 1.1 0 0 0 1.1 1.1 H918.4 M922.9 706.4 H925.6 a1.1 1.1 0 0 0 1.1 -1.1 V702.8" fill="none" stroke="#333" stroke-width="1.2" stroke-linejoin="round" stroke-linecap="round"/>
<path d="M916.7 704.3 L924.6 696.7 M921.9 696.5 H924.8 V699.4 M916.5 701.6 V704.5 H919.4" fill="none" stroke="#333" stroke-width="1.1" stroke-linejoin="round" stroke-linecap="round"/>
<line x1="909" y1="168.9" x2="923" y2="168.9" stroke="#888" stroke-width="1.6"/>
<path d="M908.4 193.2 L922.4 197.7 L917.8 200.9 L923.8 205.8 L921.3 208.8 L915.4 203.4 L912 207.5 Z" fill="none" stroke="#333" stroke-width="1.1" stroke-linejoin="miter" stroke-linecap="round"/>
<path d="M908 237.4 H910 M914.6 237.4 H923.8 M908 244.3 H917.3 M921.9 244.3 H923.8" fill="none" stroke="#999" stroke-width="1.1" stroke-linejoin="round" stroke-linecap="round"/>
<ellipse cx="912.3" cy="237.4" rx="2.1" ry="2.5" fill="none" stroke="#999" stroke-width="1.1"/><ellipse cx="919.6" cy="244.3" rx="2.1" ry="2.5" fill="none" stroke="#999" stroke-width="1.1"/>
<path d="M908.4 275.6 V288.6" fill="none" stroke="#999" stroke-width="1.1" stroke-linejoin="round" stroke-linecap="round"/>
<path d="M908 273.3 H924" fill="none" stroke="#999" stroke-width="1.1" stroke-linejoin="round" stroke-linecap="round" stroke-dasharray="1.2 1.2"/>
<path d="M922.2 277 V286.2 H912.2 M919.8 279.2 L922.2 276.8 L924.6 279.2 M914.4 283.8 L912 286.2 L914.4 288.6" fill="none" stroke="#999" stroke-width="1.1" stroke-linejoin="round" stroke-linecap="round"/>
<path d="M914 313.9 L923.9 323.9 L921.5 326.3 L911.6 316.3 Z M914.2 318.9 L916.6 316.5" fill="none" stroke="#333" stroke-width="1.1" stroke-linejoin="round" stroke-linecap="round"/>
<path d="M921.4 313.4 L923.2 315.4 L921.4 317.4 L919.6 315.4 Z M910.6 321.8 L912.4 323.8 L910.6 325.8 L908.8 323.8 Z" fill="none" stroke="#333" stroke-width="1.1" stroke-linejoin="round" stroke-linecap="round"/>
<path d="M916 368 H909.4 V360 a3 3 0 0 1 -0.6 -4.2 a2.6 2.6 0 0 1 2 -1.4 H921 a2.8 2.8 0 0 1 2.6 2" fill="none" stroke="#333" stroke-width="1.1" stroke-linejoin="round" stroke-linecap="round"/>
<path d="M917 367.6 C915.4 364.6 916 361 918.4 358.6 C919.6 361.6 919 365 917 367.6 Z M919.4 367.8 C919.6 365.2 921 363.4 923.6 362.6 C923.6 365.2 922 367.2 919.4 367.8 Z M915.6 367.8 C913.6 367 912.8 365.4 913 363.4 C914.8 364.2 915.8 365.8 915.6 367.8 Z" fill="none" stroke="#333" stroke-width="0.9" stroke-linejoin="round" stroke-linecap="round"/>
<path d="M915.6 394.6 L908.6 392.8 V406 L914.4 407.6 M915.6 394.6 L922.4 392.8 V399.4 M915.6 394.6 V399.6" fill="none" stroke="#333" stroke-width="1.1" stroke-linejoin="round" stroke-linecap="round"/>
<circle cx="918.8" cy="403.6" r="3.3" fill="none" stroke="#333" stroke-width="1.1"/>
<line x1="921.3" y1="406.1" x2="923.8" y2="408.4" stroke="#333" stroke-width="1.1" stroke-linecap="round"/>
<circle cx="915.9" cy="440.8" r="7.7" fill="none" stroke="#333" stroke-width="1.1"/>
<path d="M913.4 438.8 a2.6 2.6 0 1 1 3.6 2.4 Q915.9 441.8 915.9 443.4" fill="none" stroke="#333" stroke-width="1.1" stroke-linejoin="round" stroke-linecap="round"/>
<circle cx="915.9" cy="445.4" r="0.75" fill="#333"/>
<circle cx="909.9" cy="480.9" r="1.6" fill="none" stroke="#333" stroke-width="1.1"/>
<circle cx="915.9" cy="480.9" r="1.6" fill="none" stroke="#333" stroke-width="1.1"/>
<circle cx="921.9" cy="480.9" r="1.6" fill="none" stroke="#333" stroke-width="1.1"/>
</svg>
</body></html>
